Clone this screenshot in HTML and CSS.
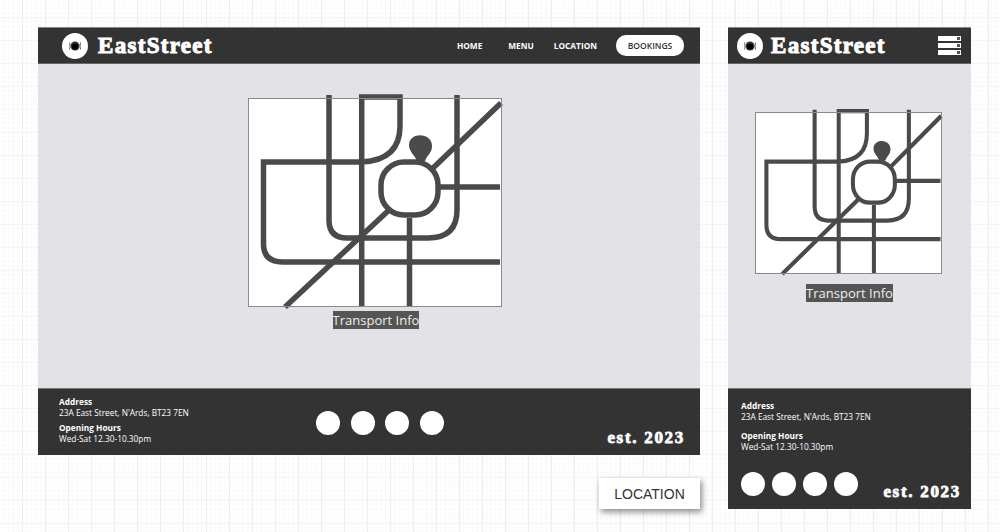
FILE: index.html
```html
<!DOCTYPE html>
<html lang="en">
<head>
<meta charset="utf-8">
<title>EastStreet</title>
<link rel="stylesheet" href="styles.css">
</head>
<body>
<svg class="defs" width="0" height="0" aria-hidden="true">
  <symbol id="map" class="map-symbol" viewBox="0 0 254 209" preserveAspectRatio="none">
    <g fill="none" stroke="#4a4a4a" stroke-width="5.500">
      <path d="M81 -3V122Q81 140 99 140H180Q209 140 209 112V-3"/>
      <path d="M113.700 209V-1H152V28Q152 62 114 64H15.500V146Q15.500 164 35 164H252"/>
      <path d="M253 5L185 70M140 113L37 209"/>
      <rect x="133" y="64" width="57" height="53" rx="23"/>
      <path d="M192 89H252M161.500 120V209"/>
    </g>
    <path d="M161 47C161 34 184 34 184 48C184 55 179 57 177 63H169C167 57 161 54 161 47Z" fill="#4a4a4a"/>
  </symbol>
  <symbol id="logo" viewBox="0 0 26 26">
    <circle cx="13" cy="13" r="13" fill="#fff"/>
    <path d="M7.500 9.500Q8.500 13 7.500 16.500" fill="none" stroke="#9a6a3a" stroke-width="1"/>
    <path d="M18.500 9.500Q17.500 13 18.500 16.500" fill="none" stroke="#3a6a9a" stroke-width="1"/>
    <circle cx="13" cy="13" r="4.500" fill="#333"/>
    <circle cx="13" cy="13.500" r="3" fill="#000"/>
  </symbol>
</svg>

<div class="left">
  <section class="frame frame-wide">
    <header class="bar">
      <a class="brand"><svg class="logo"><use href="#logo"/></svg><span class="name">EastStreet</span></a>
      <nav class="nav">
        <a class="nav-home">HOME</a>
        <a class="nav-menu">MENU</a>
        <a class="nav-location">LOCATION</a>
        <a class="pill">BOOKINGS</a>
      </nav>
    </header>
    <main class="content">
      <svg class="map"><use href="#map" width="100%" height="100%"/></svg>
      <span class="caption">Transport Info</span>
    </main>
    <footer class="foot">
      <div class="info">
        <p class="info-block"><b>Address</b><br>23A East Street, N'Ards, BT23 7EN</p>
        <p class="info-block"><b>Opening Hours</b><br>Wed-Sat 12.30-10.30pm</p>
      </div>
      <div class="dots"><i></i><i></i><i></i><i></i></div>
      <div class="est">est. 2023</div>
    </footer>
  </section>
  <div class="tag">LOCATION</div>
</div>

<section class="frame frame-narrow">
  <header class="bar">
    <a class="brand"><svg class="logo"><use href="#logo"/></svg><span class="name">EastStreet</span></a>
    <div class="burger"><i></i><i></i><i></i></div>
  </header>
  <main class="content">
    <svg class="map"><use href="#map" width="100%" height="100%"/></svg>
    <span class="caption">Transport Info</span>
  </main>
  <footer class="foot">
    <div class="info">
      <p class="info-block"><b>Address</b><br>23A East Street, N'Ards, BT23 7EN</p>
      <p class="info-block"><b>Opening Hours</b><br>Wed-Sat 12.30-10.30pm</p>
    </div>
    <div class="foot-row">
      <div class="dots"><i></i><i></i><i></i><i></i></div>
      <div class="est">est. 2023</div>
    </div>
  </footer>
</section>
</body>
</html>
```
FILE: styles.css
```css
* { box-sizing: border-box; }
html, body { height: 100%; }
body {
  margin: 0;
  height: 532px;
  overflow: hidden;
  padding: 27px 0 0 38px;
  display: flex;
  align-items: flex-start;
  gap: 28px;
  font-family: "Open Sans", sans-serif;
  background-color: #fff;
  background-image:
    linear-gradient(#f4f4f4 1px, transparent 1px),
    linear-gradient(90deg, #ededed 1px, transparent 1px),
    linear-gradient(#fafafa 1px, transparent 1px),
    linear-gradient(90deg, #f9f9f9 1px, transparent 1px);
  background-size: 23px 23px, 23px 23px, 4.600px 4.600px, 4.600px 4.600px;
  background-position: 0 17px, 22px 0, 0 17px, 22px 0;
}
.defs { position: absolute; }
.map-symbol { overflow: visible; }
.left { display: flex; flex-direction: column; align-items: flex-end; }
.frame { display: flex; flex-direction: column; background: #e2e2e7; }
.frame-wide { width: 662px; height: 428px; }
.frame-narrow { width: 243px; height: 482px; }

.bar {
  height: 37px;
  flex: none;
  display: flex;
  align-items: center;
  background: #333;
  border-top: 1px solid #8a8a8a;
  border-bottom: 1px solid #666;
}
.frame-wide .bar { padding: 0 16px 0 24px; justify-content: space-between; }
.frame-narrow .bar { padding: 0 10px 0 9px; justify-content: space-between; }

.brand { display: flex; align-items: center; gap: 10px; }
.frame-narrow .brand { gap: 8px; }
.logo { width: 26px; height: 26px; display: block; overflow: visible; }
.name {
  font-family: "Liberation Serif", serif;
  font-weight: 700;
  font-size: 23px;
  letter-spacing: 1.300px;
  color: #fff;
  -webkit-text-stroke: 1px #fff;
  line-height: 26px;
}
.nav { display: flex; align-items: center; font-size: 8.300px; font-weight: 700; color: #fff; }
.nav-home { margin-right: 26px; }
.nav-menu { margin-right: 20px; }
.nav-location { margin-right: 19px; }
.pill {
  width: 68px;
  height: 21px;
  border-radius: 10px;
  background: #fff;
  color: #333;
  font-size: 8.500px;
  font-weight: 600;
  display: flex;
  align-items: center;
  justify-content: center;
}
.burger { display: flex; flex-direction: column; gap: 2px; }
.burger i {
  display: block;
  width: 23px;
  height: 5px;
  background: #fff;
  position: relative;
}
.burger i::after {
  content: "";
  position: absolute;
  right: 1px;
  top: 1px;
  width: 3px;
  height: 3px;
  background: #555;
}

.content { flex: 1; display: flex; flex-direction: column; align-items: center; }
.frame-wide .content { padding: 34px 0 0 14px; }
.frame-narrow .content { padding: 48px 0 0 0; }
.map { display: block; overflow: visible; background: #fff; outline: 1px solid #8a8a8a; outline-offset: -1px; }
.frame-wide .map { width: 254px; height: 209px; margin-right: 2px; }
.frame-narrow .map { width: 187px; height: 162px; margin-right: 3px; }
.caption {
  background: #555;
  color: #eee;
  font-size: 13px;
  line-height: 18px;
}
.frame-wide .caption { margin-top: 4px; }
.frame-narrow .caption { margin-top: 10px; }

.foot { background: #333; color: #fff; border-top: 1px solid #777; flex: none; }
.frame-wide .foot { height: 67px; padding: 8px 15px 0 21px; display: flex; position: relative; }
.frame-narrow .foot { height: 121px; padding: 12px 10px 0 13px; }
.info { font-size: 8.300px; line-height: 10.500px; }
.frame-wide .info { width: 257px; }
.info-block { margin: 0; }
.info-block b { font-weight: 700; }
.frame-wide .info-block + .info-block { margin-top: 5px; }
.frame-narrow .info-block + .info-block { margin-top: 9px; }
.dots { display: flex; }
.frame-wide .dots { gap: 10.500px; margin-top: 14px; }
.frame-narrow .dots { gap: 7px; }
.dots i { display: block; width: 24px; height: 24px; border-radius: 50%; background: #fff; }
.est {
  font-family: "Liberation Serif", serif;
  font-weight: 700;
  font-size: 17px;
  letter-spacing: 1.700px;
  -webkit-text-stroke: .8px #fff;
  line-height: 16px;
  white-space: nowrap;
}
.frame-wide .est { margin-left: auto; margin-top: 33px; }
.foot-row { display: flex; justify-content: space-between; align-items: flex-end; margin-top: 20px; }
.foot-row .est { margin-bottom: -4px; }

.tag {
  margin-top: 23px;
  width: 101px;
  height: 31px;
  background: #fff;
  color: #333;
  font-family: "Liberation Sans", sans-serif;
  font-size: 14px;
  display: flex;
  align-items: center;
  justify-content: center;
  box-shadow: 2px 3px 6px rgba(0,0,0,.45);
}
```
